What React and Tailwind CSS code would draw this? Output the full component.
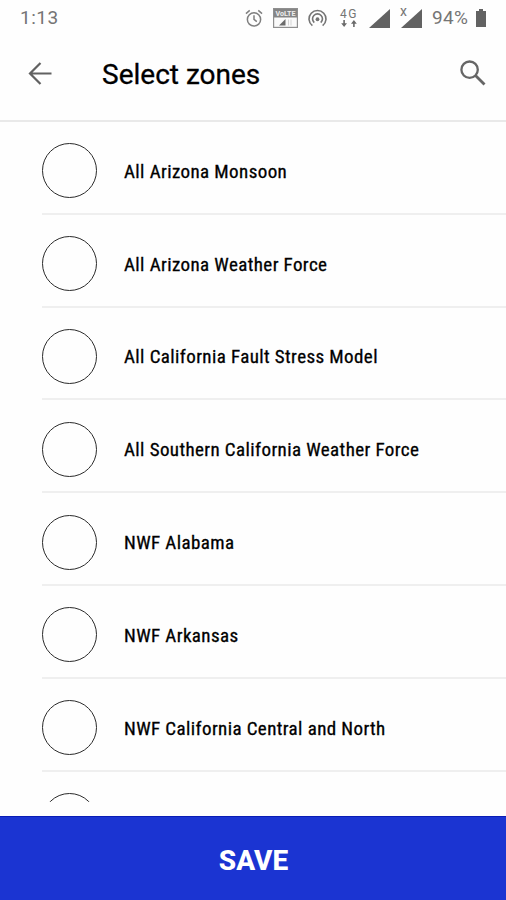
import React from 'react';

const zones = [
    'All Arizona Monsoon',
    'All Arizona Weather Force',
    'All California Fault Stress Model',
    'All Southern California Weather Force',
    'NWF Alabama',
    'NWF Arkansas',
    'NWF California Central and North',
];

function AlarmIcon() {
    return (
        <svg className="w-[18px] h-[19px] shrink-0" viewBox="0 0 19 20" fill="none" stroke="#808080" strokeWidth="1.6">
            <circle cx="9.5" cy="11" r="7" />
            <path d="M9.500 6.500V11l3 2.300M1 4.800 5 1.500M18 4.800 14 1.500" />
        </svg>
    );
}

function VolteIcon() {
    return (
        <svg className="w-[25px] h-5 shrink-0" viewBox="0 0 25 20">
            <rect x=".6" y=".6" width="23.8" height="18.8" fill="#fafafa" stroke="#8f8f8f" strokeWidth="1.2" />
            <path d="M1 1h23v8.500H1z" fill="#858585" />
            <text x="12.5" y="7.9" textAnchor="middle" fontSize="8" fontWeight="700" fontFamily="Roboto, sans-serif" textLength="20" lengthAdjust="spacingAndGlyphs" fill="#eee">VoLTE</text>
            <path d="M6 17.500h6.500V11z" fill="#6c6c6c" />
            <path d="M15.500 11.500v6M18 11.500v6" stroke="#d4d4d4" />
        </svg>
    );
}

function HotspotIcon() {
    return (
        <svg className="w-[19px] h-[19px] shrink-0" viewBox="0 0 20 20" fill="none" stroke="#747474" strokeWidth="1.7">
            <path d="M4.600 17.600A8.900 8.900 0 1 1 15.400 17.600M6.600 14.300A5.200 5.200 0 1 1 13.400 14.300" />
            <circle cx="10" cy="10.800" r="2" fill="#747474" stroke="none" />
        </svg>
    );
}

function DataArrows() {
    return (
        <svg className="w-4 h-[7px]" viewBox="0 0 16 7" fill="#6a6a6a">
            <path d="M2.300 0h1.600v3.200H6L3.100 7 .2 3.200h2.100zM12.100 7h1.600V3.800h2.100L12.900 0 10 3.800h2.100z" />
        </svg>
    );
}

function SignalIcon() {
    return (
        <svg className="w-[21px] h-[19px] shrink-0" viewBox="0 0 21 19">
            <path d="M0 19h21V0z" fill="#626262" />
        </svg>
    );
}

function StatusBar() {
    return (
        <div className="h-9 shrink-0 flex items-center pl-[20px] pr-[20px] text-[#757575]">
            <span className="text-[19px] leading-6 tracking-[0.5px]">1:13</span>
            <div className="ml-auto flex items-center">
                <AlarmIcon />
                <span className="w-[10px]" />
                <VolteIcon />
                <span className="w-[10px]" />
                <HotspotIcon />
                <div className="w-[17px] ml-[13px] flex flex-col items-center">
                    <span className="text-[12px] leading-[11px] tracking-[1.5px] -mr-[1px]">4G</span>
                    <DataArrows />
                </div>
                <span className="w-[12px]" />
                <SignalIcon />
                <span className="w-[11px]" />
                <div className="relative mr-[1px]">
                    <SignalIcon />
                    <span className="absolute -left-[1px] -top-[5px] text-[14px] leading-[14px]">x</span>
                </div>
                <span className="w-[38px] ml-[9px] text-[19px] leading-6 tracking-[0.3px]">94%</span>
                <svg className="w-[10px] h-[18px] ml-[6px] shrink-0" viewBox="0 0 10 18" fill="#626262">
                    <path d="M3 0h4v2h3v16H0V2h3z" />
                </svg>
            </div>
        </div>
    );
}

function ZoneRow({ name }) {
    return (
        <div className="h-[92.8px] shrink-0 flex items-center ml-[42px] border-b-2 border-[#efefef]">
            <span className="w-[55px] h-[55px] mt-[7px] rounded-full border-[1.4px] border-[#2a2a2a] shrink-0" />
            <span className="ml-[27px] mt-[9px] text-[19px] leading-6 tracking-[0.4px] font-normal font-['Roboto_Condensed',Roboto,sans-serif] text-black whitespace-nowrap [-webkit-text-stroke:0.3px_#000]">
                {name}
            </span>
        </div>
    );
}

export default function App() {
    return (
        <div className="w-[506px] h-[900px] flex flex-col overflow-hidden bg-[#fefefe] font-[Roboto,sans-serif]">
            <StatusBar />
            <header className="h-[86px] shrink-0 flex items-center pl-7 pr-[20px] pb-[10px] border-b-2 border-[#e9e9e9]">
                <button aria-label="Back">
                    <svg className="w-6 h-6" viewBox="0 0 24 24" fill="none" stroke="#616161" strokeWidth="2.2">
                        <path d="M23.500 12.500H2M12.500 2 2 12.500l10.500 10.500" />
                    </svg>
                </button>
                <h1 className="ml-[50px] mt-[4px] text-[28px] leading-8 font-normal text-black [-webkit-text-stroke:0.3px_#000]">Select zones</h1>
                <button aria-label="Search" className="ml-auto">
                    <svg className="w-[26px] h-[26px]" viewBox="0 0 26 26" fill="none" stroke="#666">
                        <circle cx="9.600" cy="9.700" r="8.200" strokeWidth="2.300" />
                        <path d="m15.500 15.500 9 9" strokeWidth="2.800" />
                    </svg>
                </button>
            </header>
            <main className="h-[680px] shrink-0 flex flex-col overflow-hidden">
                {zones.map((name) => (
                    <ZoneRow key={name} name={name} />
                ))}
                <ZoneRow name="" />
            </main>
            <button className="mt-auto h-[84px] shrink-0 bg-[#1b34d2] border-t border-[#0a1cb5] text-white text-[28px] leading-8 font-extrabold pt-1 pl-[1px]">
                SAVE
            </button>
        </div>
    );
}
